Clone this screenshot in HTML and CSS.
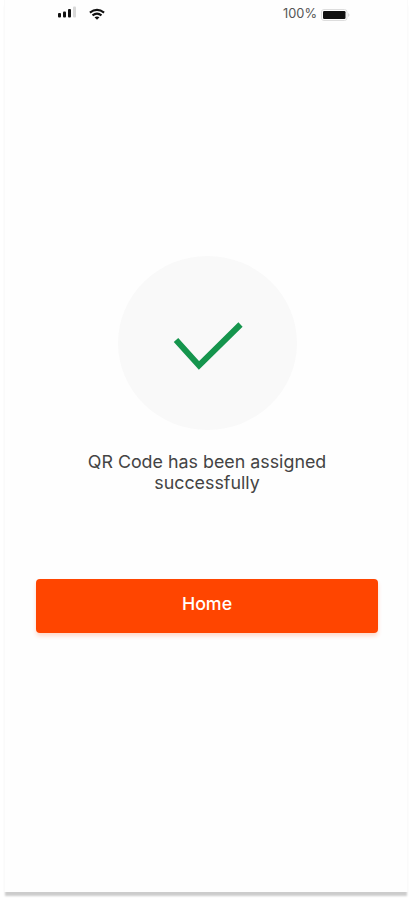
FILE: index.html
```
<!DOCTYPE html>
<html lang="en">
<head>
    <meta charset="UTF-8">
    <meta name="viewport" content="width=device-width, initial-scale=1.0">
    <title>QR Code Assigned</title>
    <link rel="stylesheet" href="styles.css">
</head>
<body>
    <div class="screen">
        <header class="status-bar">
            <div class="status-group">
                <svg class="signal-icon" width="18" height="12" viewBox="0 0 18 12">
                    <rect x="0" y="7" width="3" height="4.5" rx="1" fill="#111"/>
                    <rect x="5" y="5.5" width="3" height="6" rx="1" fill="#111"/>
                    <rect x="10" y="3" width="3" height="8.5" rx="1" fill="#111"/>
                    <rect x="15" y="0.5" width="3" height="11" rx="1" fill="#d8d8d8"/>
                </svg>
                <svg class="wifi-icon" width="16" height="12" viewBox="0 0 16 12">
                    <g fill="none" stroke="#111" stroke-width="2.1">
                        <path d="M0.9 4.6Q8 -0.8 15.1 4.6"/>
                        <path d="M3.5 7.4Q8 3.9 12.5 7.4"/>
                    </g>
                    <path d="M5.5 9.3Q8 7.5 10.5 9.3L8 11.8Z" fill="#111"/>
                </svg>
            </div>
            <div class="status-group">
                <span class="battery-text">100%</span>
                <svg class="battery-icon" width="30" height="12" viewBox="0 0 30 12">
                    <rect x="0.5" y="0.5" width="25.5" height="11" rx="2.5" fill="#fff" stroke="#ddd"/>
                    <rect x="2" y="2" width="22.5" height="8" rx="1.2" fill="#111"/>
                    <path d="M27.3 4Q29.5 6 27.3 8Z" fill="#ccc"/>
                </svg>
            </div>
        </header>

        <main class="content">
            <div class="success-circle">
                <svg width="70" height="50" viewBox="0 0 70 50">
                    <path d="M3 18L26 43.5L67.5 2.5" fill="none" stroke="#15954d" stroke-width="6"/>
                </svg>
            </div>
            <p class="message">QR Code has been assigned<br>successfully</p>
            <button class="home-button">Home</button>
        </main>
    </div>
</body>
</html>
```

FILE: styles.css
```
body {
    margin: 0;
    padding: 0 3px 0 4px;
    height: 900px;
    box-sizing: border-box;
    overflow: hidden;
    background-color: #fff;
    font-family: Inter, sans-serif;
}

.screen {
    height: 892px;
    box-sizing: border-box;
    border-left: 1px solid #fafafa;
    border-right: 1px solid #fafafa;
    background-color: #fefefe;
    box-shadow: 0 5px 2px -1px #ccc; /* Bottom edge shadow */
}

.status-bar {
    display: flex;
    justify-content: space-between;
    align-items: center;
    height: 28px;
    padding: 0 56px 0 53px;
}

.status-group {
    display: flex;
    align-items: center;
}

.signal-icon {
    margin-bottom: 4px;
}

.wifi-icon {
    margin-left: 13px;
}

.battery-text {
    margin-right: 4px;
    font-size: 12.8px;
    line-height: 16px;
    color: #555;
}

.battery-icon {
    margin-top: 2px;
}

.content {
    display: flex;
    flex-direction: column;
    align-items: center;
    padding: 228px 29px 0 31px;
}

.success-circle {
    display: flex;
    justify-content: center;
    align-items: center;
    width: 179px;
    height: 174px;
    padding: 7px 0 0 2px;
    box-sizing: border-box;
    border-radius: 50%;
    background-color: #f9f9f9;
}

.message {
    margin: 21px 0 86px;
    font-size: 17.85px;
    line-height: 21px;
    text-align: center;
    color: #444;
}

.home-button {
    width: 100%;
    height: 54px;
    padding: 0 0 5px;
    border: none;
    border-radius: 4px;
    background-color: #ff4500;
    box-shadow: 0 3px 4px rgba(255, 69, 0, 0.2);
    color: #fff;
    font-family: inherit;
    font-size: 17.8px;
    font-weight: 500;
    cursor: pointer;
}
```
